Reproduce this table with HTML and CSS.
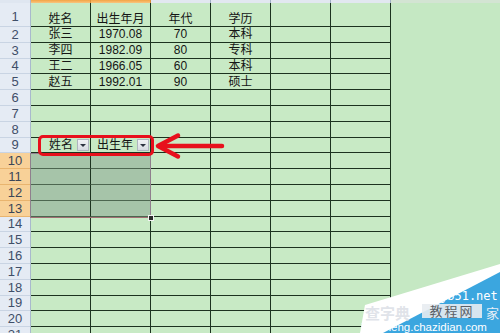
FILE: index.html
```html
<!DOCTYPE html>
<html lang="zh-CN">
<head>
<meta charset="utf-8">
<title>Sheet</title>
<link rel="stylesheet" href="styles.css">
</head>
<body>
<div class="sheet">
  <div class="row top"><div class="th"></div><div class="ch on"></div><div class="ch on"></div><div class="ch"></div><div class="ch"></div><div class="ch"></div><div class="ch"></div><div class="chr"></div></div>
  <div class="row first"><div class="rh">1</div><div class="c">姓名</div><div class="c">出生年月</div><div class="c">年代</div><div class="c">学历</div><div class="c"></div><div class="c"></div><div class="x"></div></div>
  <div class="row"><div class="rh">2</div><div class="c">张三</div><div class="c">1970.08</div><div class="c">70</div><div class="c">本科</div><div class="c"></div><div class="c"></div><div class="x"></div></div>
  <div class="row"><div class="rh">3</div><div class="c">李四</div><div class="c">1982.09</div><div class="c">80</div><div class="c">专科</div><div class="c"></div><div class="c"></div><div class="x"></div></div>
  <div class="row"><div class="rh">4</div><div class="c">王二</div><div class="c">1966.05</div><div class="c">60</div><div class="c">本科</div><div class="c"></div><div class="c"></div><div class="x"></div></div>
  <div class="row"><div class="rh">5</div><div class="c">赵五</div><div class="c">1992.01</div><div class="c">90</div><div class="c">硕士</div><div class="c"></div><div class="c"></div><div class="x"></div></div>
  <div class="row"><div class="rh">6</div><div class="c"></div><div class="c"></div><div class="c"></div><div class="c"></div><div class="c"></div><div class="c"></div><div class="x"></div></div>
  <div class="row"><div class="rh">7</div><div class="c"></div><div class="c"></div><div class="c"></div><div class="c"></div><div class="c"></div><div class="c"></div><div class="x"></div></div>
  <div class="row"><div class="rh">8</div><div class="c"></div><div class="c"></div><div class="c"></div><div class="c"></div><div class="c"></div><div class="c"></div><div class="x"></div></div>
  <div class="row"><div class="rh">9</div><div class="c filt"><span>姓名</span><span class="dd"></span></div><div class="c filt f2"><span>出生年</span><span class="dd"></span></div><div class="c"></div><div class="c"></div><div class="c"></div><div class="c"></div><div class="x"></div></div>
  <div class="row"><div class="rh hl">10</div><div class="c sel"></div><div class="c sel"></div><div class="c"></div><div class="c"></div><div class="c"></div><div class="c"></div><div class="x"></div></div>
  <div class="row"><div class="rh hl">11</div><div class="c sel"></div><div class="c sel"></div><div class="c"></div><div class="c"></div><div class="c"></div><div class="c"></div><div class="x"></div></div>
  <div class="row"><div class="rh hl">12</div><div class="c sel"></div><div class="c sel"></div><div class="c"></div><div class="c"></div><div class="c"></div><div class="c"></div><div class="x"></div></div>
  <div class="row"><div class="rh hl">13</div><div class="c sel"></div><div class="c sel"></div><div class="c"></div><div class="c"></div><div class="c"></div><div class="c"></div><div class="x"></div></div>
  <div class="row"><div class="rh">14</div><div class="c"></div><div class="c"></div><div class="c"></div><div class="c"></div><div class="c"></div><div class="c"></div><div class="x"></div></div>
  <div class="row"><div class="rh">15</div><div class="c"></div><div class="c"></div><div class="c"></div><div class="c"></div><div class="c"></div><div class="c"></div><div class="x"></div></div>
  <div class="row"><div class="rh">16</div><div class="c"></div><div class="c"></div><div class="c"></div><div class="c"></div><div class="c"></div><div class="c"></div><div class="x"></div></div>
  <div class="row"><div class="rh">17</div><div class="c"></div><div class="c"></div><div class="c"></div><div class="c"></div><div class="c"></div><div class="c"></div><div class="x"></div></div>
  <div class="row"><div class="rh">18</div><div class="c"></div><div class="c"></div><div class="c"></div><div class="c"></div><div class="c"></div><div class="c"></div><div class="x"></div></div>
  <div class="row"><div class="rh">19</div><div class="c"></div><div class="c"></div><div class="c"></div><div class="c"></div><div class="c"></div><div class="c"></div><div class="x"></div></div>
  <div class="row"><div class="rh">20</div><div class="c"></div><div class="c"></div><div class="c"></div><div class="c"></div><div class="c"></div><div class="c"></div><div class="x"></div></div>
  <div class="row"><div class="rh">21</div><div class="c"></div><div class="c"></div><div class="c"></div><div class="c"></div><div class="c"></div><div class="c"></div><div class="x"></div></div>
</div>

<div class="selbox"><span class="handle"></span></div>
<div class="redbox"></div>
<svg class="arrow" width="80" height="32" viewBox="0 0 80 32">
  <polyline points="28,5.5 8,16 28,26.5" fill="none" stroke="#e8101c" stroke-width="4.5" stroke-linecap="round" stroke-linejoin="round"/>
  <line x1="9" y1="16" x2="72" y2="16" stroke="#e8101c" stroke-width="4.5" stroke-linecap="round"/>
</svg>

<div class="wm">
  <svg class="wm-bg" width="140" height="78" viewBox="0 0 140 78">
    <polygon points="5,50 140,9 140,78 0,78" fill="#ffffff"/>
    <polygon points="140,17 23,78 140,78" fill="#3ba6df"/>
  </svg>
  <span class="wm-jb">jb51.net</span>
  <span class="wm-cz">查字典</span>
  <span class="wm-jc">教程网</span>
  <span class="wm-jia">家</span>
  <span class="wm-url">jiaocheng.chazidian.com</span>
</div>
</body>
</html>
```

FILE: styles.css
```css
* { box-sizing: border-box; }
html, body { margin: 0; padding: 0; }
body {
  width: 500px;
  height: 333px;
  overflow: hidden;
  position: relative;
  background: #c5e8c3;
  font-family: "Liberation Sans", "Noto Sans CJK SC", sans-serif;
  font-size: 12px;
  color: #151515;
}
.sheet { display: flex; flex-direction: column; }
.row {
  display: grid;
  grid-template-columns: 31px repeat(6, 60px) 1fr;
  height: 15.8px;
  flex: none;
}
.row.top { height: 3px; }
.row.first { height: 24px; }
.th { background: #dfe6f0; border-right: 1px solid #a9b9cd; }
.ch { background: #e2e8f0; border-right: 1px solid #a3b3c6; }
.ch.on { background: linear-gradient(#f3a444, #f8c57f); border-right-color: #d98f3a; }
.chr { background: #d3e4d3; }
.rh {
  background: #e5ebf4;
  border-right: 1px solid #a9b9cd;
  border-bottom: 1px solid #c9d4e3;
  color: #3f4e68;
  font-size: 13px;
  display: flex;
  align-items: center;
  justify-content: center;
  line-height: 1;
}
.row.first .rh { align-items: flex-end; padding-bottom: 3px; }
.rh.hl { background: #f8d198; border-bottom-color: #e9b46e; color: #3b4557; }
.c {
  background: #c8eac5;
  border-right: 1px solid #1c321f;
  border-bottom: 1px solid #1c321f;
  display: flex;
  align-items: center;
  justify-content: center;
  line-height: 1;
  white-space: nowrap;
}
.row.first .c { align-items: flex-end; padding-bottom: 1px; }
.c.sel { background: #a6c4a9; border-bottom-color: #4d6650; }
.c.filt { justify-content: flex-end; padding-right: 1px; }
.c.filt span:first-child { margin-right: 4px; }
.x { background: #c5e8c3; }
.dd {
  width: 12px;
  height: 12px;
  background: linear-gradient(#f1f2f5, #d6dae1);
  border: 1px solid #aeb4bf;
  display: flex;
  align-items: center;
  justify-content: center;
}
.dd::after {
  content: "";
  border-left: 3px solid transparent;
  border-right: 3px solid transparent;
  border-top: 3px solid #2c3340;
  margin-top: 1px;
}
.selbox {
  position: absolute;
  left: 30px;
  top: 153px;
  width: 121px;
  height: 65px;
  border: 1px solid #8f7f8d;
  border-bottom-color: #a26f74;
}
.handle {
  position: absolute;
  right: -4px;
  bottom: -4px;
  width: 6px;
  height: 6px;
  background: #2a2a2a;
  border: 1px solid #f4f4f4;
}
.redbox {
  position: absolute;
  left: 38px;
  top: 135px;
  width: 116px;
  height: 21px;
  border: 3.5px solid #e8101c;
  border-radius: 5px;
}
.arrow { position: absolute; left: 150px; top: 130px; }
.wm { position: absolute; left: 360px; top: 255px; width: 140px; height: 78px; }
.wm-bg { position: absolute; left: 0; top: 0; }
.wm-jb {
  position: absolute;
  left: 80px;
  top: 36px;
  font-family: "DejaVu Sans Mono", monospace;
  font-size: 12px;
  line-height: 10px;
  color: #ffffff;
}
.wm-cz {
  position: absolute;
  left: 5px;
  top: 50px;
  font-family: "Noto Sans CJK SC", sans-serif;
  font-size: 15px;
  line-height: 15px;
  color: rgba(222, 226, 232, 0.95);
  font-weight: 700;
}
.wm-jc {
  position: absolute;
  left: 62px;
  top: 49px;
  width: 60px;
  height: 14px;
  background: rgba(232, 236, 241, 0.9);
  font-family: "Noto Sans CJK SC", sans-serif;
  font-size: 13px;
  line-height: 14px;
  color: #5a5f66;
  text-align: center;
  letter-spacing: 2px;
}
.wm-jia {
  position: absolute;
  left: 126px;
  top: 51px;
  font-family: "Noto Sans CJK SC", sans-serif;
  font-size: 13px;
  line-height: 13px;
  color: #e6eef6;
}
.wm-url {
  position: absolute;
  left: 1px;
  top: 67px;
  font-size: 11.5px;
  line-height: 11px;
  color: #ffffff;
  white-space: nowrap;
}
```
